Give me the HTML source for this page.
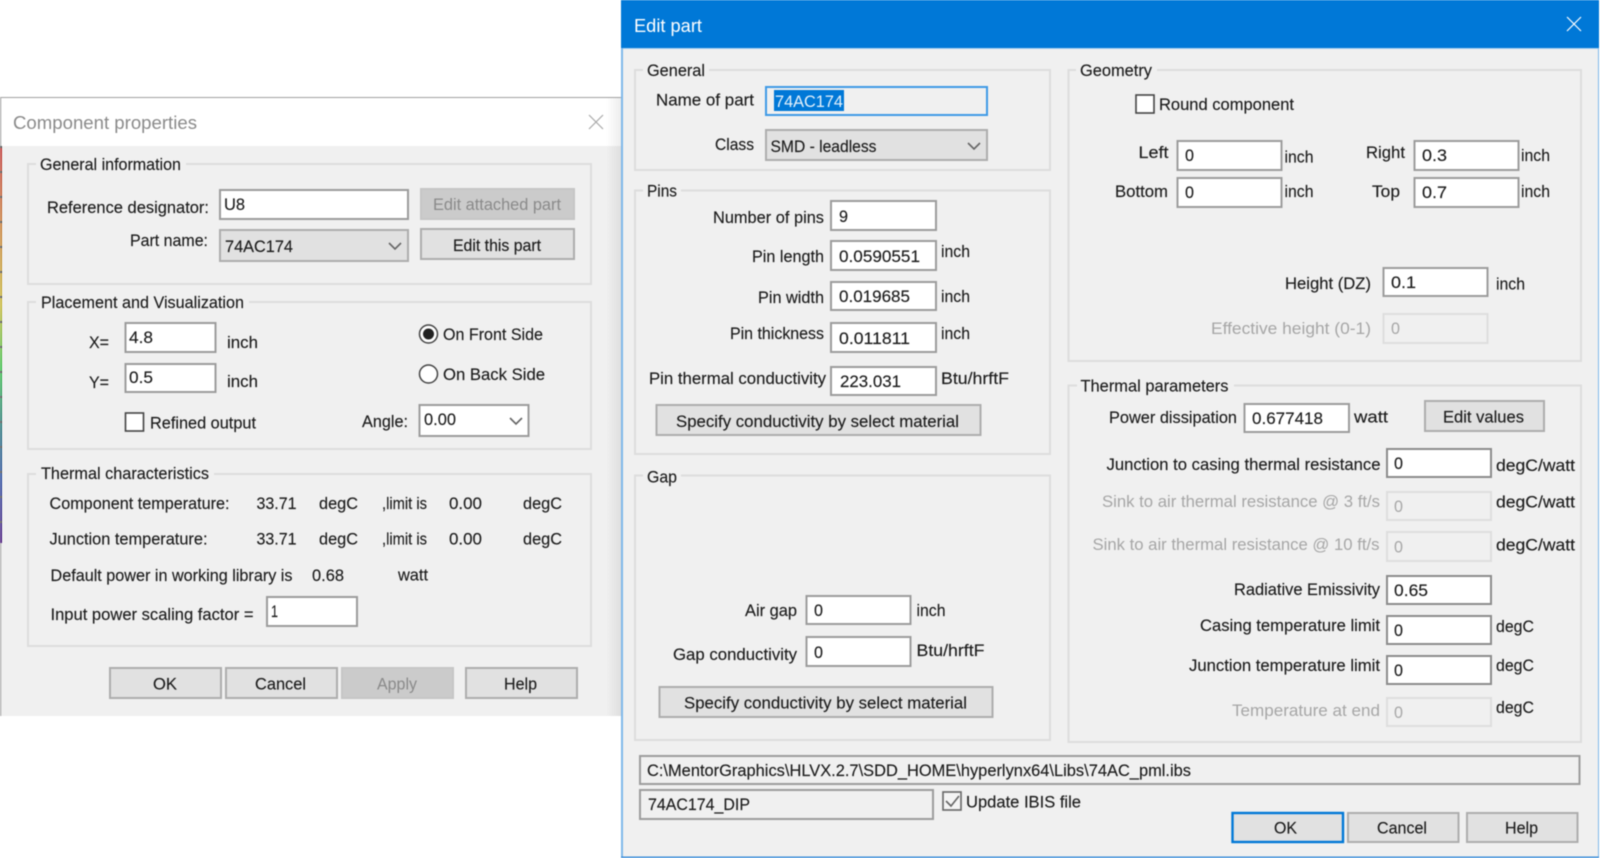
<!DOCTYPE html>
<html><head><meta charset="utf-8"><title>Edit part</title>
<style>
html,body{margin:0;padding:0;background:#fff;width:1600px;height:858px;overflow:hidden}
svg{display:block;filter:blur(.45px)}
text{font-family:"Liberation Sans",sans-serif;font-size:16.5px;fill:#1c1c1c;stroke:#1c1c1c;stroke-width:.14px;white-space:pre}
.t{font-size:18.5px;stroke:none}.n{fill:#8a8a8a;stroke:none}.w{fill:#fff}.s{fill:#e4f1fb;stroke:none}.o{fill:#a6a6a6;stroke:none}
.i{fill:#fff;stroke:#9c9c9c;stroke-width:2}
.d{fill:#f0f0f0;stroke:#dedede;stroke-width:2}
.b{fill:#e1e1e1;stroke:#adadad;stroke-width:2}
.c{fill:#cbcbcb;stroke:#c6c6c6;stroke-width:2}
.f{fill:#f0f0f0;stroke:#9c9c9c;stroke-width:2}
.g{fill:none;stroke:#dddddd;stroke-width:2}
.k{fill:#f0f0f0}
.v{fill:none;stroke:#666;stroke-width:1.6}
</style></head><body>
<svg width="1600" height="858" viewBox="0 0 1600 858" xmlns="http://www.w3.org/2000/svg">
<defs>
<linearGradient id="st" x1="0" y1="0" x2="0" y2="1">
<stop offset="0" stop-color="#c03c3c"/><stop offset=".2" stop-color="#c8803c"/><stop offset=".4" stop-color="#c8b83c"/><stop offset=".56" stop-color="#40c050"/><stop offset=".72" stop-color="#2c7480"/><stop offset=".84" stop-color="#3050a0"/><stop offset="1" stop-color="#502080"/>
</linearGradient>
<linearGradient id="sh" x1="0" y1="0" x2="1" y2="0"><stop offset="0" stop-color="#000" stop-opacity="0"/><stop offset="1" stop-color="#000" stop-opacity=".07"/></linearGradient>
</defs>

<!-- Component properties dialog -->
<rect x="0" y="98" width="621" height="48" fill="#fff"/>
<rect x="0" y="146" width="621" height="570" fill="#f0f0f0"/>
<rect x="0" y="97" width="621" height="1" fill="#a0a0a0"/>
<rect x="0" y="97" width="1.2" height="619" fill="#a8a8a8"/>
<rect x="0" y="146" width="2" height="397" fill="url(#st)"/>
<line x1="1" y1="146" x2="1" y2="543" stroke="#555" stroke-width="2" stroke-dasharray="2 23"/>
<rect x="606" y="98" width="15" height="618" fill="url(#sh)"/>
<text class="t n" x="13" y="129" textLength="184" lengthAdjust="spacingAndGlyphs">Component properties</text>
<path d="M589 115l14 14M603 115l-14 14" stroke="#a8a8a8" stroke-width="1.2" fill="none"/>

<rect class="g" x="28" y="164" width="563" height="120"/>
<rect class="k" x="36" y="158" width="150" height="12"/>
<text x="40" y="170" textLength="141" lengthAdjust="spacingAndGlyphs">General information</text>
<text x="47" y="213" textLength="162" lengthAdjust="spacingAndGlyphs">Reference designator:</text>
<rect class="i" x="220" y="190" width="188" height="29"/>
<text x="224" y="210" textLength="21" lengthAdjust="spacingAndGlyphs">U8</text>
<rect class="c" x="421" y="189" width="153" height="30"/>
<text class="n" x="433" y="210" textLength="128" lengthAdjust="spacingAndGlyphs">Edit attached part</text>
<text x="130" y="246" textLength="78" lengthAdjust="spacingAndGlyphs">Part name:</text>
<rect class="b" x="220" y="230" width="188" height="31"/>
<text x="225" y="252" textLength="68" lengthAdjust="spacingAndGlyphs">74AC174</text>
<path class="v" d="M389 243l6 6 6-6"/>
<rect class="b" x="421" y="229" width="153" height="30"/>
<text x="453" y="251" textLength="88" lengthAdjust="spacingAndGlyphs">Edit this part</text>

<rect class="g" x="28" y="302" width="563" height="147"/>
<rect class="k" x="36" y="296" width="213" height="12"/>
<text x="41" y="308" textLength="203" lengthAdjust="spacingAndGlyphs">Placement and Visualization</text>
<text x="89" y="348" textLength="20" lengthAdjust="spacingAndGlyphs">X=</text>
<rect class="i" x="125.500" y="323" width="90" height="29"/>
<text x="129" y="343" textLength="24" lengthAdjust="spacingAndGlyphs">4.8</text>
<text x="227" y="348" textLength="31" lengthAdjust="spacingAndGlyphs">inch</text>
<text x="89" y="388" textLength="20" lengthAdjust="spacingAndGlyphs">Y=</text>
<rect class="i" x="125.500" y="364" width="90" height="28"/>
<text x="129" y="383" textLength="24" lengthAdjust="spacingAndGlyphs">0.5</text>
<text x="227" y="387" textLength="31" lengthAdjust="spacingAndGlyphs">inch</text>
<circle cx="428.500" cy="334" r="9" fill="#fff" stroke="#444" stroke-width="1.5"/>
<circle cx="428.500" cy="334" r="5.5" fill="#222"/>
<text x="443" y="340" textLength="100" lengthAdjust="spacingAndGlyphs">On Front Side</text>
<circle cx="428.500" cy="374" r="9" fill="#fff" stroke="#444" stroke-width="1.5"/>
<text x="443" y="380" textLength="102" lengthAdjust="spacingAndGlyphs">On Back Side</text>
<rect x="125.500" y="413" width="18" height="18" fill="#fff" stroke="#444" stroke-width="1.6"/>
<text x="150" y="428.500" textLength="106" lengthAdjust="spacingAndGlyphs">Refined output</text>
<text x="362" y="427" textLength="46" lengthAdjust="spacingAndGlyphs">Angle:</text>
<rect class="i" x="419.500" y="405" width="109" height="31"/>
<text x="424" y="425" textLength="32" lengthAdjust="spacingAndGlyphs">0.00</text>
<path class="v" d="M510 418l6 6 6-6"/>

<rect class="g" x="28" y="474" width="563" height="172"/>
<rect class="k" x="36" y="468" width="178" height="12"/>
<text x="41" y="479" textLength="168" lengthAdjust="spacingAndGlyphs">Thermal characteristics</text>
<text x="49.500" y="509" textLength="180" lengthAdjust="spacingAndGlyphs">Component temperature:</text>
<text x="256.500" y="509" textLength="40" lengthAdjust="spacingAndGlyphs">33.71</text>
<text x="319" y="509" textLength="39" lengthAdjust="spacingAndGlyphs">degC</text>
<text x="382" y="509" textLength="45" lengthAdjust="spacingAndGlyphs">,limit is</text>
<text x="449" y="509" textLength="33" lengthAdjust="spacingAndGlyphs">0.00</text>
<text x="523" y="509" textLength="39" lengthAdjust="spacingAndGlyphs">degC</text>
<text x="49.500" y="544.500" textLength="158" lengthAdjust="spacingAndGlyphs">Junction temperature:</text>
<text x="256.500" y="544.500" textLength="40" lengthAdjust="spacingAndGlyphs">33.71</text>
<text x="319" y="544.500" textLength="39" lengthAdjust="spacingAndGlyphs">degC</text>
<text x="382" y="544.500" textLength="45" lengthAdjust="spacingAndGlyphs">,limit is</text>
<text x="449" y="544.500" textLength="33" lengthAdjust="spacingAndGlyphs">0.00</text>
<text x="523" y="544.500" textLength="39" lengthAdjust="spacingAndGlyphs">degC</text>
<text x="50.500" y="581" textLength="242" lengthAdjust="spacingAndGlyphs">Default power in working library is</text>
<text x="312" y="581" textLength="32" lengthAdjust="spacingAndGlyphs">0.68</text>
<text x="398" y="580.500" textLength="30" lengthAdjust="spacingAndGlyphs">watt</text>
<text x="50.500" y="620" textLength="203" lengthAdjust="spacingAndGlyphs">Input power scaling factor =</text>
<rect class="i" x="267" y="597" width="90" height="29"/>
<text x="271" y="617" textLength="7" lengthAdjust="spacingAndGlyphs">1</text>
<rect class="b" x="110" y="668" width="111" height="30"/>
<text x="153" y="689.500" textLength="24" lengthAdjust="spacingAndGlyphs">OK</text>
<rect class="b" x="226" y="668" width="111" height="30"/>
<text x="255" y="689.500" textLength="51" lengthAdjust="spacingAndGlyphs">Cancel</text>
<rect class="c" x="342" y="668" width="111" height="30"/>
<text class="n" x="377" y="689.500" textLength="40" lengthAdjust="spacingAndGlyphs">Apply</text>
<rect class="b" x="466" y="668" width="111" height="30"/>
<text x="504" y="689.500" textLength="33" lengthAdjust="spacingAndGlyphs">Help</text>

<!-- Edit part dialog -->
<rect x="621" y="0" width="978" height="858" fill="#f0f0f0"/>
<rect x="621" y="0" width="2" height="858" fill="#7fb8ea"/>
<rect x="1598" y="0" width="1" height="858" fill="#7fb8ea"/>
<rect x="621" y="856.500" width="978" height="1.500" fill="#3a8cd8"/>
<rect x="621" y="0" width="978" height="48" fill="#0078d7"/>
<rect x="623" y="48" width="975" height="1" fill="#a8d0f0"/>
<text class="t w" x="634" y="32" textLength="68" lengthAdjust="spacingAndGlyphs">Edit part</text>
<path d="M1567 17l14 14M1581 17l-14 14" stroke="#fff" stroke-width="1.2" fill="none"/>

<rect class="g" x="635" y="70" width="415" height="100"/>
<rect class="k" x="643" y="64" width="66" height="12"/>
<text x="647" y="76" textLength="58" lengthAdjust="spacingAndGlyphs">General</text>
<text x="656" y="105.500" textLength="98" lengthAdjust="spacingAndGlyphs">Name of part</text>
<rect x="766" y="87" width="221" height="28" fill="#f0f0f0" stroke="#3f9ae6" stroke-width="2"/>
<rect x="774" y="90" width="70" height="21" fill="#0078d7"/>
<text class="s" x="775" y="107" textLength="68" lengthAdjust="spacingAndGlyphs">74AC174</text>
<text x="715" y="150" textLength="39" lengthAdjust="spacingAndGlyphs">Class</text>
<rect class="b" x="766" y="130" width="221" height="30"/>
<text x="770.500" y="152" textLength="106" lengthAdjust="spacingAndGlyphs">SMD - leadless</text>
<path class="v" d="M968 143l6 6 6-6"/>

<rect class="g" x="635" y="190.500" width="415" height="263.500"/>
<rect class="k" x="643" y="185" width="38" height="12"/>
<text x="647" y="196.500" textLength="30" lengthAdjust="spacingAndGlyphs">Pins</text>
<text x="713" y="223" textLength="111" lengthAdjust="spacingAndGlyphs">Number of pins</text>
<rect class="i" x="831" y="201" width="105" height="29"/>
<text x="839" y="222" textLength="9" lengthAdjust="spacingAndGlyphs">9</text>
<text x="752" y="262" textLength="72" lengthAdjust="spacingAndGlyphs">Pin length</text>
<rect class="i" x="831" y="241" width="105" height="29"/>
<text x="839" y="262" textLength="81" lengthAdjust="spacingAndGlyphs">0.0590551</text>
<text x="941" y="257" textLength="29" lengthAdjust="spacingAndGlyphs">inch</text>
<text x="758" y="303" textLength="66" lengthAdjust="spacingAndGlyphs">Pin width</text>
<rect class="i" x="831" y="282" width="105" height="28"/>
<text x="839" y="302" textLength="71" lengthAdjust="spacingAndGlyphs">0.019685</text>
<text x="941" y="302" textLength="29" lengthAdjust="spacingAndGlyphs">inch</text>
<text x="730" y="339" textLength="94" lengthAdjust="spacingAndGlyphs">Pin thickness</text>
<rect class="i" x="831" y="323" width="105" height="29"/>
<text x="839" y="344" textLength="71" lengthAdjust="spacingAndGlyphs">0.011811</text>
<text x="941" y="339" textLength="29" lengthAdjust="spacingAndGlyphs">inch</text>
<text x="649" y="384" textLength="177" lengthAdjust="spacingAndGlyphs">Pin thermal conductivity</text>
<rect class="i" x="831" y="367" width="105" height="28"/>
<text x="840" y="387" textLength="61" lengthAdjust="spacingAndGlyphs">223.031</text>
<text x="941" y="384" textLength="68" lengthAdjust="spacingAndGlyphs">Btu/hrftF</text>
<rect class="b" x="656.500" y="405" width="324" height="30"/>
<text x="676" y="427" textLength="283" lengthAdjust="spacingAndGlyphs">Specify conductivity by select material</text>

<rect class="g" x="635" y="475.500" width="415" height="264.500"/>
<rect class="k" x="643" y="470" width="38" height="12"/>
<text x="647" y="482.500" textLength="30" lengthAdjust="spacingAndGlyphs">Gap</text>
<text x="745" y="616" textLength="52" lengthAdjust="spacingAndGlyphs">Air gap</text>
<rect class="i" x="806.500" y="596" width="104" height="28"/>
<text x="814" y="616" textLength="9" lengthAdjust="spacingAndGlyphs">0</text>
<text x="916.500" y="616" textLength="29" lengthAdjust="spacingAndGlyphs">inch</text>
<text x="673" y="660" textLength="124" lengthAdjust="spacingAndGlyphs">Gap conductivity</text>
<rect class="i" x="806.500" y="637" width="104" height="29"/>
<text x="814" y="658" textLength="9" lengthAdjust="spacingAndGlyphs">0</text>
<text x="916.500" y="656" textLength="68" lengthAdjust="spacingAndGlyphs">Btu/hrftF</text>
<rect class="b" x="659.500" y="687" width="333" height="30"/>
<text x="684" y="708.500" textLength="283" lengthAdjust="spacingAndGlyphs">Specify conductivity by select material</text>

<rect class="g" x="1068.500" y="70" width="512.500" height="291"/>
<rect class="k" x="1076" y="64" width="81" height="12"/>
<text x="1080" y="76" textLength="72" lengthAdjust="spacingAndGlyphs">Geometry</text>
<rect x="1136" y="95" width="18" height="18" fill="#fff" stroke="#444" stroke-width="1.6"/>
<text x="1159" y="110" textLength="135" lengthAdjust="spacingAndGlyphs">Round component</text>
<text x="1138.500" y="158" textLength="30" lengthAdjust="spacingAndGlyphs">Left</text>
<rect class="i" x="1177.500" y="141" width="104" height="29"/>
<text x="1185" y="161" textLength="9" lengthAdjust="spacingAndGlyphs">0</text>
<text x="1284.500" y="162.500" textLength="29" lengthAdjust="spacingAndGlyphs">inch</text>
<text x="1366" y="158" textLength="39" lengthAdjust="spacingAndGlyphs">Right</text>
<rect class="i" x="1414.500" y="141" width="104" height="29"/>
<text x="1422" y="161" textLength="25" lengthAdjust="spacingAndGlyphs">0.3</text>
<text x="1521" y="161" textLength="29" lengthAdjust="spacingAndGlyphs">inch</text>
<text x="1115" y="197" textLength="53" lengthAdjust="spacingAndGlyphs">Bottom</text>
<rect class="i" x="1177.500" y="178" width="104" height="29"/>
<text x="1185" y="198" textLength="9" lengthAdjust="spacingAndGlyphs">0</text>
<text x="1284.500" y="197" textLength="29" lengthAdjust="spacingAndGlyphs">inch</text>
<text x="1372" y="197" textLength="28" lengthAdjust="spacingAndGlyphs">Top</text>
<rect class="i" x="1414.500" y="178" width="104" height="29"/>
<text x="1422" y="198" textLength="25" lengthAdjust="spacingAndGlyphs">0.7</text>
<text x="1521" y="197" textLength="29" lengthAdjust="spacingAndGlyphs">inch</text>
<text x="1285" y="289" textLength="86" lengthAdjust="spacingAndGlyphs">Height (DZ)</text>
<rect class="i" x="1383.500" y="268" width="104" height="28"/>
<text x="1391" y="288" textLength="25" lengthAdjust="spacingAndGlyphs">0.1</text>
<text x="1496" y="289.500" textLength="29" lengthAdjust="spacingAndGlyphs">inch</text>
<text class="o" x="1211" y="334" textLength="160" lengthAdjust="spacingAndGlyphs">Effective height (0-1)</text>
<rect class="d" x="1383.500" y="314" width="104" height="29"/>
<text class="o" x="1391" y="334" textLength="9" lengthAdjust="spacingAndGlyphs">0</text>

<rect class="g" x="1068.500" y="385.500" width="512.500" height="356.500"/>
<rect class="k" x="1077" y="380" width="157" height="12"/>
<text x="1080.500" y="391.500" textLength="148" lengthAdjust="spacingAndGlyphs">Thermal parameters</text>
<text x="1109" y="423" textLength="128" lengthAdjust="spacingAndGlyphs">Power dissipation</text>
<rect class="i" x="1244.500" y="404" width="104.500" height="28"/>
<text x="1252" y="424" textLength="71" lengthAdjust="spacingAndGlyphs">0.677418</text>
<text x="1354" y="422.500" textLength="34" lengthAdjust="spacingAndGlyphs">watt</text>
<rect class="b" x="1425" y="401" width="119" height="30"/>
<text x="1443" y="422.500" textLength="81" lengthAdjust="spacingAndGlyphs">Edit values</text>

<text x="1106.500" y="470" textLength="274" lengthAdjust="spacingAndGlyphs">Junction to casing thermal resistance</text>
<rect x="1387" y="449" width="104" height="28" fill="#fff" stroke="#8c8c8c" stroke-width="2"/>
<text x="1394" y="469" textLength="9" lengthAdjust="spacingAndGlyphs">0</text>
<text x="1496" y="471" textLength="79" lengthAdjust="spacingAndGlyphs">degC/watt</text>
<text class="o" x="1102" y="507" textLength="278" lengthAdjust="spacingAndGlyphs">Sink to air thermal resistance @ 3 ft/s</text>
<rect class="d" x="1387" y="492" width="104" height="28"/>
<text class="o" x="1394" y="512" textLength="9" lengthAdjust="spacingAndGlyphs">0</text>
<text x="1496" y="507.500" textLength="79" lengthAdjust="spacingAndGlyphs">degC/watt</text>
<text class="o" x="1092.500" y="550" textLength="287" lengthAdjust="spacingAndGlyphs">Sink to air thermal resistance @ 10 ft/s</text>
<rect class="d" x="1387" y="532" width="104" height="29"/>
<text class="o" x="1394" y="552.500" textLength="9" lengthAdjust="spacingAndGlyphs">0</text>
<text x="1496" y="550.500" textLength="79" lengthAdjust="spacingAndGlyphs">degC/watt</text>
<text x="1234" y="595" textLength="146" lengthAdjust="spacingAndGlyphs">Radiative Emissivity</text>
<rect x="1387" y="576" width="104" height="28" fill="#fff" stroke="#8c8c8c" stroke-width="2"/>
<text x="1394" y="596" textLength="34" lengthAdjust="spacingAndGlyphs">0.65</text>
<text x="1200" y="631" textLength="180" lengthAdjust="spacingAndGlyphs">Casing temperature limit</text>
<rect x="1387" y="616" width="104" height="28" fill="#fff" stroke="#8c8c8c" stroke-width="2"/>
<text x="1394" y="636" textLength="9" lengthAdjust="spacingAndGlyphs">0</text>
<text x="1496" y="632" textLength="38" lengthAdjust="spacingAndGlyphs">degC</text>
<text x="1189" y="671" textLength="191" lengthAdjust="spacingAndGlyphs">Junction temperature limit</text>
<rect x="1387" y="656" width="104" height="28" fill="#fff" stroke="#8c8c8c" stroke-width="2"/>
<text x="1394" y="676" textLength="9" lengthAdjust="spacingAndGlyphs">0</text>
<text x="1496" y="671" textLength="38" lengthAdjust="spacingAndGlyphs">degC</text>
<text class="o" x="1232" y="716" textLength="148" lengthAdjust="spacingAndGlyphs">Temperature at end</text>
<rect class="d" x="1387" y="698" width="104" height="28"/>
<text class="o" x="1394" y="718" textLength="9" lengthAdjust="spacingAndGlyphs">0</text>
<text x="1496" y="713" textLength="38" lengthAdjust="spacingAndGlyphs">degC</text>

<rect class="f" x="640" y="756" width="939.500" height="28"/>
<text x="647" y="776" textLength="544" lengthAdjust="spacingAndGlyphs">C:\MentorGraphics\HLVX.2.7\SDD_HOME\hyperlynx64\Libs\74AC_pml.ibs</text>
<rect class="f" x="640" y="790" width="293" height="29"/>
<text x="648" y="810" textLength="102" lengthAdjust="spacingAndGlyphs">74AC174_DIP</text>
<rect x="943" y="792" width="18" height="18" fill="#f4f4f4" stroke="#666" stroke-width="1.6"/>
<path d="M946 801l5 5 8-10" fill="none" stroke="#666" stroke-width="1.6"/>
<text x="966" y="807.500" textLength="115" lengthAdjust="spacingAndGlyphs">Update IBIS file</text>
<rect x="1232.500" y="813" width="110.500" height="29" fill="#e1e1e1" stroke="#0078d7" stroke-width="2.400"/>
<text x="1274" y="833.500" textLength="23" lengthAdjust="spacingAndGlyphs">OK</text>
<rect class="b" x="1348" y="813" width="110.500" height="29"/>
<text x="1377" y="833.500" textLength="50" lengthAdjust="spacingAndGlyphs">Cancel</text>
<rect class="b" x="1467" y="813" width="110.500" height="29"/>
<text x="1505" y="833.500" textLength="33" lengthAdjust="spacingAndGlyphs">Help</text>
</svg>
</body></html>
